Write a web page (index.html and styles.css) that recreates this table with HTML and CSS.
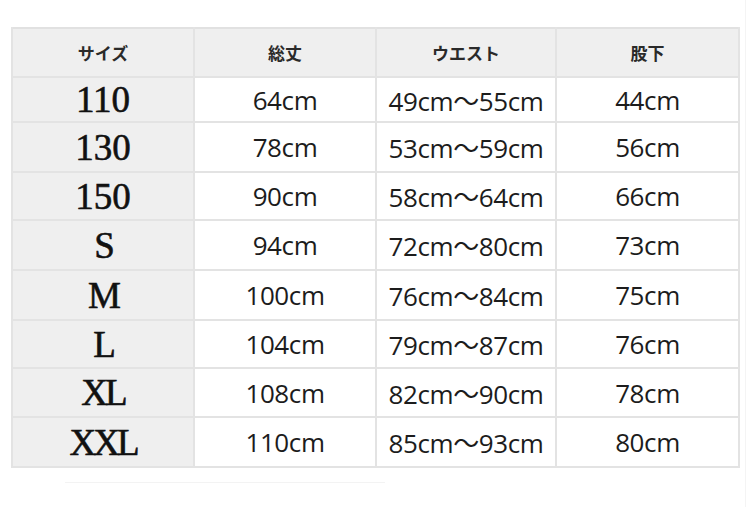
FILE: index.html
```html
<!DOCTYPE html>
<html lang="ja">
<head>
<meta charset="utf-8">
<link rel="stylesheet" href="styles.css">
</head>
<body>
<div class="page">
  <table class="size-table">
    <colgroup>
      <col class="c1"><col class="c2"><col class="c3"><col class="c4">
    </colgroup>
    <thead>
      <tr class="head">
        <th>サイズ</th><th>総丈</th><th>ウエスト</th><th>股下</th>
      </tr>
    </thead>
    <tbody>
      <tr class="r1"><th class="size num">110</th><td>64cm</td><td>49cm〜55cm</td><td>44cm</td></tr>
      <tr class="r2"><th class="size num">130</th><td>78cm</td><td>53cm〜59cm</td><td>56cm</td></tr>
      <tr class="r3"><th class="size num">150</th><td>90cm</td><td>58cm〜64cm</td><td>66cm</td></tr>
      <tr class="r4"><th class="size">S</th><td>94cm</td><td>72cm〜80cm</td><td>73cm</td></tr>
      <tr class="r5"><th class="size">M</th><td>100cm</td><td>76cm〜84cm</td><td>75cm</td></tr>
      <tr class="r6"><th class="size">L</th><td>104cm</td><td>79cm〜87cm</td><td>76cm</td></tr>
      <tr class="r7"><th class="size">XL</th><td>108cm</td><td>82cm〜90cm</td><td>78cm</td></tr>
      <tr class="r8"><th class="size">XXL</th><td>110cm</td><td>85cm〜93cm</td><td>80cm</td></tr>
    </tbody>
  </table>
  <div class="shadow-line"></div>
</div>
</body>
</html>
```
FILE: styles.css
```css
html, body {
  margin: 0;
  padding: 0;
  background: #ffffff;
}
.page {
  width: 746px;
  height: 507px;
  box-sizing: border-box;
  padding: 27px 0 0 11px;
  border-right: 1px solid #f4f4f4;
}
.size-table {
  border-collapse: collapse;
  table-layout: fixed;
  width: 727px;
  border: 2px solid #e1e1e1;
}
.c1 { width: 182px; }
.c2 { width: 182px; }
.c3 { width: 180px; }
.c4 { width: 183px; }
.size-table th,
.size-table td {
  border: 2px solid #e3e3e3;
  padding: 0;
  text-align: center;
  vertical-align: middle;
}
.head th {
  height: 47px;
  background: #efefef;
  font-family: "Noto Sans CJK JP", sans-serif;
  font-weight: 700;
  font-size: 17px;
  color: #2a2a2a;
  border-top: none;
  border-bottom: none;
}
.size-table td {
  background: #ffffff;
  font-family: "Open Sans", "Noto Sans CJK JP", sans-serif;
  font-size: 26px;
  color: #1c1c1c;
  letter-spacing: -0.4px;
}
.size-table th.size {
  background: #efefef;
  font-family: "Liberation Serif", serif;
  font-weight: 400;
  font-size: 37px;
  color: #111;
  -webkit-text-stroke: 0.6px #111;
  letter-spacing: -3px;
}
.size-table th.num {
  letter-spacing: 0;
}
.r1 > * { height: 43px; }
.r2 > * { height: 48px; }
.r3 > * { height: 46px; }
.r4 > * { height: 48px; }
.r5 > * { height: 48px; }
.r6 > * { height: 46px; }
.r7 > * { height: 47px; }
.r8 > * { height: 48px; }
.shadow-line {
  width: 320px;
  height: 1px;
  margin: 14px 0 0 54px;
  background: #f3f3f3;
}
```
